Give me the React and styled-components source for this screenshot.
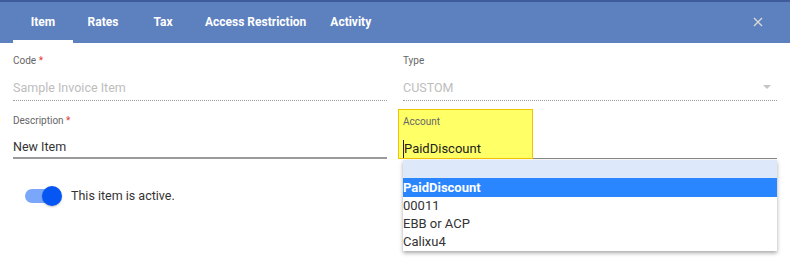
import styled, { createGlobalStyle } from "styled-components";

const GlobalStyle = createGlobalStyle`
  html, body {
    margin: 0;
    padding: 0;
    background: #ffffff;
    font-family: Roboto, "Liberation Sans", Arial, sans-serif;
  }
`;

const StyledWrap = styled.div`
  width: 790px;
  height: 268px;
  overflow: hidden;
  background: #ffffff;
`;

const StyledHeader = styled.div`
  height: 41px;
  border-top: 2px solid #3e5b9c;
  background: #5d80bf;
  display: flex;
  align-items: stretch;
  padding: 0 13px;
`;

const StyledTabs = styled.div`
  display: flex;
  flex: 1;
`;

const StyledTab = styled.div`
  min-width: 60px;
  box-sizing: border-box;
  padding: 2px 12px 0;
  display: flex;
  align-items: center;
  justify-content: center;
  color: #ffffff;
  font-size: 12px;
  font-weight: 700;
  border-bottom: 3px solid ${(p) => (p.$active ? "#ffffff" : "transparent")};
`;

const StyledClose = styled.div`
  width: 34px;
  display: flex;
  align-items: center;
  justify-content: center;
  margin-right: 2px;
  padding-bottom: 1px;
`;

const StyledForm = styled.div`
  display: grid;
  grid-template-columns: 374px 374px;
  column-gap: 16px;
  padding: 0 13px;
`;

const StyledField = styled.div`
  position: relative;
  padding-top: ${(p) => p.$top}px;
  border-bottom: ${(p) => p.$line};
`;

const StyledLabel = styled.div`
  font-size: 10px;
  line-height: 14px;
  color: #666666;

  span {
    color: #e53935;
  }
`;

const StyledValue = styled.div`
  display: flex;
  align-items: center;
  justify-content: space-between;
  margin-top: ${(p) => p.$gap}px;
  height: 20px;
  font-size: 12.5px;
  color: ${(p) => (p.$muted ? "#bdbdbd" : "#333333")};
  padding-bottom: ${(p) => p.$bottom}px;
`;

const StyledArrow = styled.div`
  width: 0;
  height: 0;
  margin-right: 6px;
  border-left: 4px solid transparent;
  border-right: 4px solid transparent;
  border-top: 4px solid #c4c4c4;
`;

const StyledHighlight = styled.div`
  width: 135px;
  box-sizing: border-box;
  margin: 8px 0 -1px -5px;
  padding: 5px 0 0 4px;
  background: #ffff66;
  border: 1px solid #f2c400;
  height: 50px;
`;

const StyledAccountValue = styled.div`
  margin-top: 11px;
  font-size: 13px;
  line-height: 18px;
  color: #222222;
  border-left: 1px solid #222222;
  width: fit-content;
`;

const StyledMenu = styled.div`
  position: absolute;
  top: 100%;
  left: 0;
  right: 0;
  margin-top: 2px;
  background: #ffffff;
  box-shadow: 0 2px 4px rgba(0, 0, 0, 0.35);
  z-index: 5;
`;

const StyledOption = styled.div`
  height: ${(p) => (p.$selected ? 19 : 18)}px;
  line-height: ${(p) => (p.$selected ? 19 : 18)}px;
  font-size: 13px;
  color: ${(p) => (p.$selected ? "#ffffff" : "#333333")};
  font-weight: ${(p) => (p.$selected ? 700 : 400)};
  background: ${(p) => (p.$blank ? "#dde9fb" : p.$selected ? "#2a86ff" : "#ffffff")};
`;

const StyledToggleRow = styled.div`
  display: flex;
  align-items: center;
  gap: 10px;
  padding: 29px 0 0 25px;
`;

const StyledTrack = styled.div`
  position: relative;
  width: 36px;
  height: 14px;
  border-radius: 7px;
  background: #7ba7fb;
`;

const StyledKnob = styled.div`
  position: absolute;
  right: -1px;
  top: -3px;
  width: 20px;
  height: 20px;
  border-radius: 50%;
  background: #0556f2;
  box-shadow: 0 1px 2px rgba(0, 0, 0, 0.25);
`;

const StyledToggleText = styled.div`
  font-size: 12.5px;
  color: #333333;
`;

const tabs = ["Item", "Rates", "Tax", "Access Restriction", "Activity"];
const options = ["", "PaidDiscount", "00011", "EBB or ACP", "Calixu4"];

const App = () => {
  return (
    <>
      <GlobalStyle />
      <StyledWrap>
        <StyledHeader>
          <StyledTabs>
            {tabs.map((t, i) => (
              <StyledTab key={t} $active={i === 0}>
                {t}
              </StyledTab>
            ))}
          </StyledTabs>
          <StyledClose>
            <svg width="10" height="10" viewBox="0 0 10 10">
              <path d="M1 1 L9 9 M9 1 L1 9" stroke="#d8d8d8" strokeWidth="1.4" />
            </svg>
          </StyledClose>
        </StyledHeader>

        <StyledForm>
          <StyledField $top={11} $line="1px dotted #9e9e9e">
            <StyledLabel>
              Code <span>*</span>
            </StyledLabel>
            <StyledValue $gap={9} $bottom={3} $muted>
              Sample Invoice Item
            </StyledValue>
          </StyledField>

          <StyledField $top={11} $line="1px dotted #9e9e9e">
            <StyledLabel>Type</StyledLabel>
            <StyledValue $gap={9} $bottom={3} $muted>
              CUSTOM
              <StyledArrow />
            </StyledValue>
          </StyledField>

          <StyledField $top={13} $line="2px solid #9a9a9a">
            <StyledLabel>
              Description <span>*</span>
            </StyledLabel>
            <StyledValue $gap={8} $bottom={1}>
              New Item
            </StyledValue>
          </StyledField>

          <StyledField $top={0} $line="1px solid #8a8a8a">
            <StyledHighlight>
              <StyledLabel>Account</StyledLabel>
              <StyledAccountValue>PaidDiscount</StyledAccountValue>
            </StyledHighlight>
            <StyledMenu>
              {options.map((o, i) => (
                <StyledOption key={i} $blank={i === 0} $selected={i === 1}>
                  {o}
                </StyledOption>
              ))}
            </StyledMenu>
          </StyledField>
        </StyledForm>

        <StyledToggleRow>
          <StyledTrack>
            <StyledKnob />
          </StyledTrack>
          <StyledToggleText>This item is active.</StyledToggleText>
        </StyledToggleRow>
      </StyledWrap>
    </>
  );
};

export default App;
